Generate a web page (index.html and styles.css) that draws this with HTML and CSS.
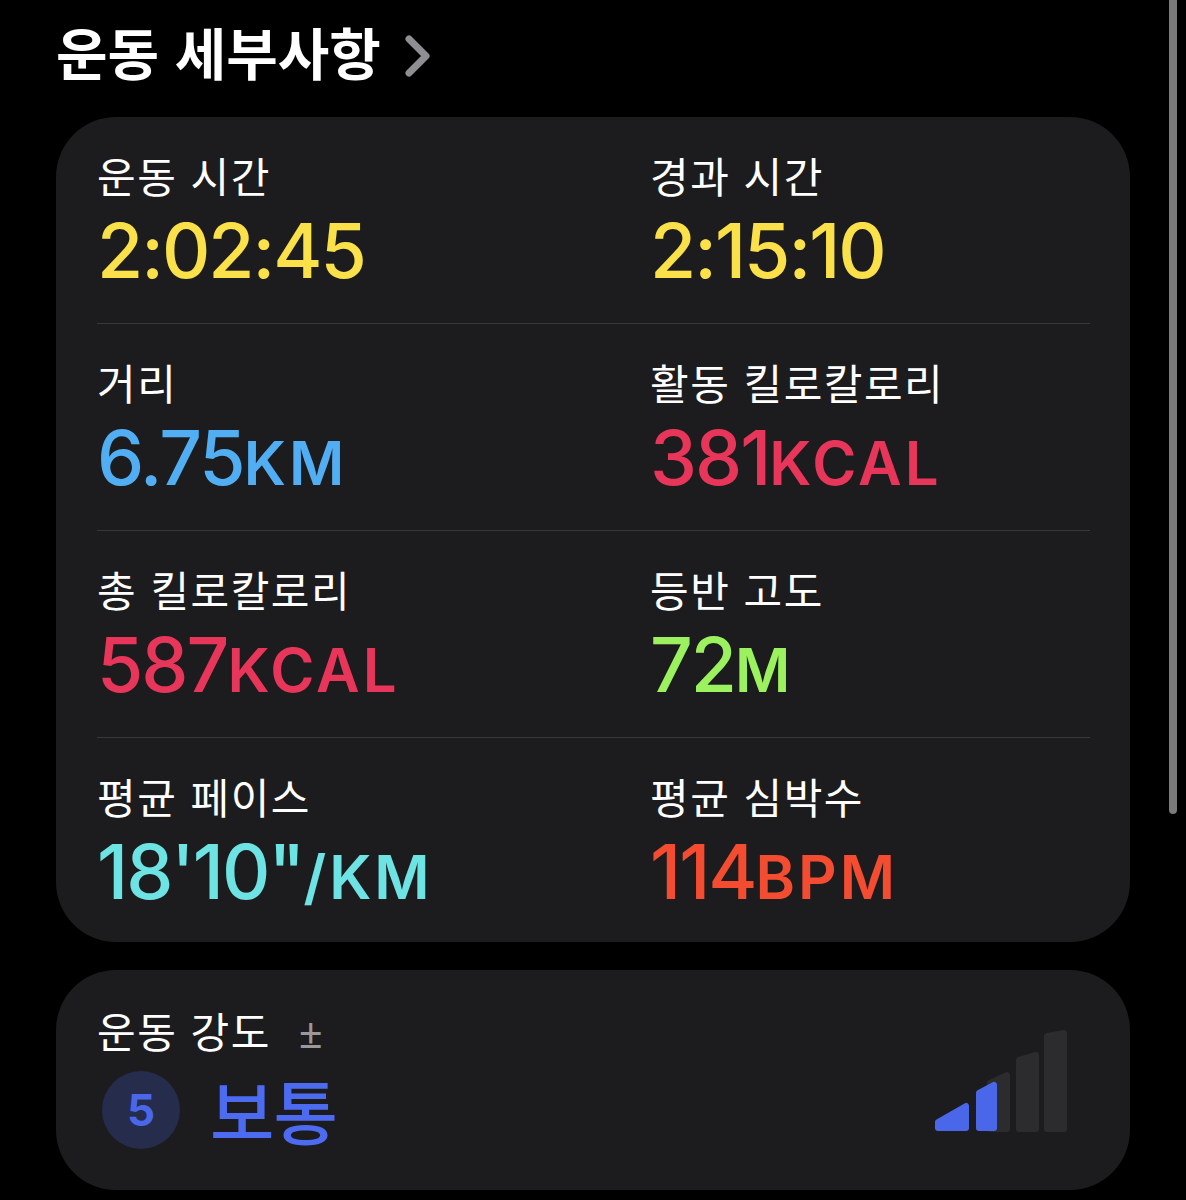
FILE: index.html
```html
<!DOCTYPE html>
<html lang="ko">
<head>
<meta charset="utf-8">
<title>운동 세부사항</title>
<link rel="stylesheet" href="styles.css">
</head>
<body>
<main class="page">
  <h1 class="title">운동 세부사항
    <svg class="chevron" width="30" height="46" viewBox="0 0 30 46" aria-hidden="true"><path d="M6 6 L23 23 L6 40" fill="none" stroke="#8e8e93" stroke-width="7" stroke-linecap="round" stroke-linejoin="round"/></svg>
  </h1>

  <section class="card stats">
    <div class="row">
      <div class="stat"><div class="label">운동 시간</div><div class="value yellow">2:02:45</div></div>
      <div class="stat"><div class="label">경과 시간</div><div class="value yellow">2:15:10</div></div>
    </div>
    <div class="row">
      <div class="stat"><div class="label">거리</div><div class="value blue">6.75<span class="unit">KM</span></div></div>
      <div class="stat"><div class="label">활동 킬로칼로리</div><div class="value red">381<span class="unit">KCAL</span></div></div>
    </div>
    <div class="row">
      <div class="stat"><div class="label">총 킬로칼로리</div><div class="value red">587<span class="unit">KCAL</span></div></div>
      <div class="stat"><div class="label">등반 고도</div><div class="value green">72<span class="unit">M</span></div></div>
    </div>
    <div class="row last">
      <div class="stat"><div class="label">평균 페이스</div><div class="value cyan">18'10"<span class="unit">/KM</span></div></div>
      <div class="stat"><div class="label">평균 심박수</div><div class="value orange">114<span class="unit">BPM</span></div></div>
    </div>
  </section>

  <section class="card effort">
    <div class="effort-main">
      <div class="label">운동 강도<span class="pm">±</span></div>
      <div class="effort-row">
        <div class="badge">5</div>
        <div class="level">보통</div>
      </div>
    </div>
    <svg class="bars" width="142" height="111" viewBox="0 0 142 111" aria-hidden="true">
      <g stroke-linejoin="round" stroke-width="6">
        <polygon points="89,35 106,30 106,104 89,104" fill="#2c2c2e" stroke="#2c2c2e"/>
        <polygon points="117,11 134,8 134,104 117,104" fill="#2c2c2e" stroke="#2c2c2e"/>
        <polygon points="60,58 77,50 77,104 60,104" fill="#2c2c2e" stroke="#2c2c2e"/>
        <polygon points="49,68 64,60 64,103 49,103" fill="#4a67ea" stroke="#4a67ea"/>
        <polygon points="8,100 8,97 36,81 36,103 8,103" fill="#4a67ea" stroke="#4a67ea"/>
      </g>
    </svg>
  </section>
</main>
<div class="scrollbar"></div>
</body>
</html>
```

FILE: styles.css
```css
html, body {
  margin: 0;
  padding: 0;
  background: #000;
}

body {
  font-family: "Noto Sans CJK KR", "Noto Sans", sans-serif;
  color: #fff;
}

.page {
  width: 1074px;
  padding: 20px 0 0 56px;
}

.title {
  margin: 0;
  height: 97px;
  font-size: 56px;
  line-height: 62px;
  font-weight: 700;
  letter-spacing: 0;
  display: flex;
  align-items: flex-start;
  gap: 22px;
}

.chevron {
  margin-top: 13px;
}

.card {
  background: #1c1c1e;
  border-radius: 60px;
  box-sizing: border-box;
}

.stats {
  padding: 0 40px 0 41px;
}

.row {
  display: grid;
  grid-template-columns: 553px 1fr;
  padding: 34px 0 35px;
  border-bottom: 1px solid #38383a;
}

.row.last {
  border-bottom: none;
  padding-bottom: 33px;
}

.label {
  font-size: 42px;
  line-height: 48px;
  height: 48px;
  font-weight: 400;
  color: #fff;
  letter-spacing: 1.5px;
}

.value {
  margin-top: 15px;
  height: 74px;
  font-family: "Inter", "Noto Sans", sans-serif;
  font-size: 75px;
  line-height: 74px;
  font-weight: 500;
  letter-spacing: -2px;
  white-space: nowrap;
}

.unit {
  font-size: 60px;
  line-height: 0;
  font-weight: 600;
  letter-spacing: 3px;
}

.yellow { color: #fae14a; }
.blue { color: #51aef2; }
.red { color: #e8355a; }
.green { color: #9cf25e; }
.cyan { color: #6ee3e3; }
.orange { color: #f44c30; }

.effort {
  margin-top: 28px;
  height: 220px;
  display: flex;
  align-items: center;
  padding: 0 58px 0 46px;
}

.effort-main {
  flex: 1;
  align-self: flex-start;
  padding-top: 36px;
}

.effort-main .label {
  margin-left: -5px;
}

.pm {
  margin-left: 28px;
  font-family: "Noto Sans", sans-serif;
  font-size: 42px;
  letter-spacing: 0;
  color: #98989d;
}

.effort-row {
  margin-top: 17px;
  display: flex;
  align-items: center;
  gap: 30px;
}

.badge {
  width: 78px;
  height: 78px;
  border-radius: 50%;
  background: #262c4b;
  color: #4a67ea;
  font-family: "Inter", "Noto Sans", sans-serif;
  font-size: 44px;
  font-weight: 700;
  display: flex;
  align-items: center;
  justify-content: center;
}

.level {
  font-size: 70px;
  line-height: 78px;
  font-weight: 500;
  color: #4d6bf0;
  letter-spacing: -1px;
}

.bars {
  align-self: center;
}

.scrollbar {
  position: fixed;
  top: 0;
  left: 1169px;
  width: 8px;
  height: 814px;
  border-radius: 0 0 4px 4px;
  background: #7a7a7a;
}
```
